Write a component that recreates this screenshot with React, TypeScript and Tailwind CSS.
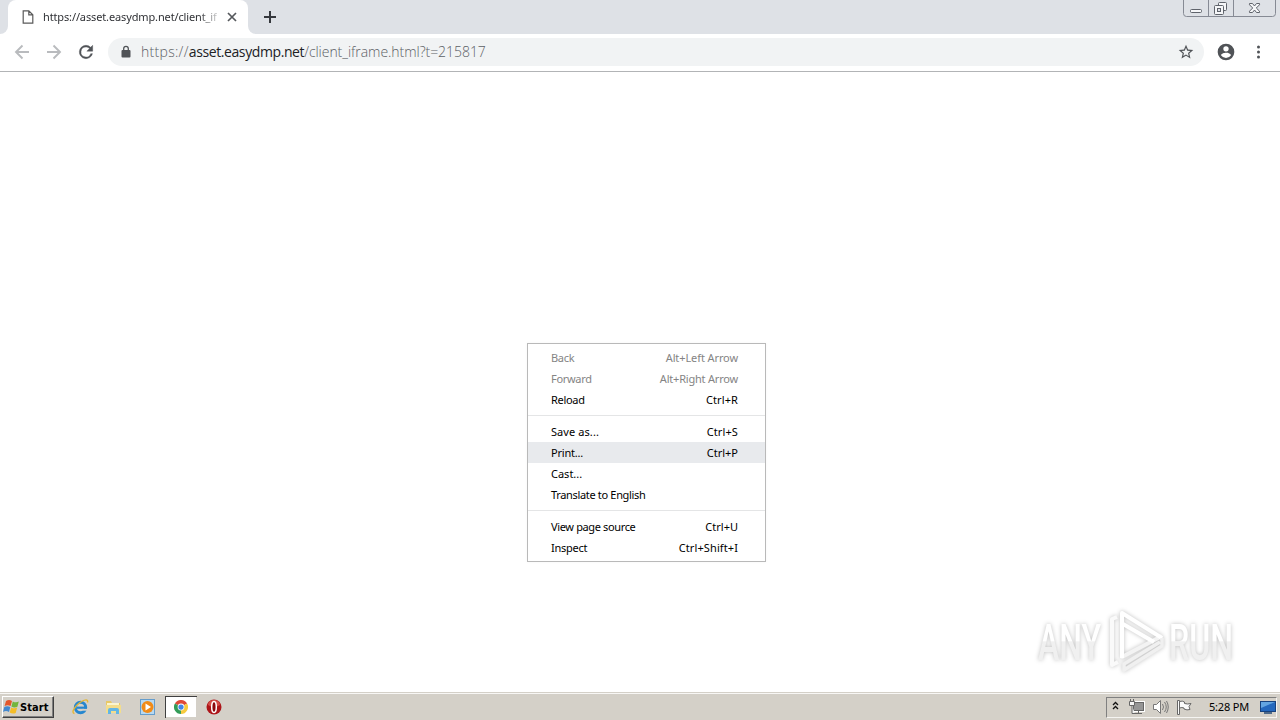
import { useId } from "react";

type MenuItem = { label: string; keys?: string; disabled?: boolean; active?: boolean; labelClass?: string; keysClass?: string };

const groups: MenuItem[][] = [
  [
    { label: "Back", keys: "Alt+Left Arrow", disabled: true, labelClass: "tracking-[-0.3px]", keysClass: "tracking-[-0.1px]" },
    { label: "Forward", keys: "Alt+Right Arrow", disabled: true, labelClass: "tracking-[-0.3px]", keysClass: "tracking-[-0.2px]" },
    { label: "Reload", keys: "Ctrl+R", labelClass: "tracking-[-0.3px]", keysClass: "tracking-[0.1px]" },
  ],
  [
    { label: "Save as...", keys: "Ctrl+S", labelClass: "tracking-[0.08px]", keysClass: "tracking-[0.1px]" },
    { label: "Print...", keys: "Ctrl+P", active: true, labelClass: "tracking-[-0.2px]" },
    { label: "Cast..." },
    { label: "Translate to English", labelClass: "tracking-[-0.33px]" },
  ],
  [
    { label: "View page source", keys: "Ctrl+U", labelClass: "tracking-[-0.36px]" },
    { label: "Inspect", keys: "Ctrl+Shift+I", labelClass: "tracking-[-0.25px]", keysClass: "tracking-[0.1px]" },
  ],
];

function TabStrip() {
  return (
    <div className="flex h-[34px] items-start bg-[#dee1e6]">
      <div className="flex h-[34px] w-2 shrink-0 items-end bg-white">
        <div className="h-full w-full rounded-br-lg bg-[#dee1e6]" />
      </div>
      <div className="flex h-[34px] w-60 shrink-0 items-center rounded-t-lg bg-white pl-[14px]">
        <svg width="12" height="14" viewBox="0 0 12 14" fill="none" stroke="#5a5a5a" strokeWidth="1.2">
          <path d="M1.2.8h5.6l4 4v8.4H1.2zM6.8.8v4h4" />
        </svg>
        <span className="ml-[9px] w-[174px] whitespace-nowrap text-[11px] leading-4 tracking-[-0.13px] text-[#303236] [mask-image:linear-gradient(to_right,black_156px,transparent_180px)]">
          https://asset.easydmp.net/client_ifr
        </span>
        <svg className="ml-[10px]" width="10" height="10" viewBox="0 0 10 10" stroke="#55585c" strokeWidth="1.7">
          <path d="M1 1l8 8M9 1L1 9" />
        </svg>
      </div>
      <div className="h-[34px] w-2 shrink-0 bg-white">
        <div className="h-full w-full rounded-bl-lg bg-[#dee1e6]" />
      </div>
      <svg className="ml-2 mt-[11px]" width="12" height="12" viewBox="0 0 12 12" stroke="#35383d" strokeWidth="2">
        <path d="M6 0v12M0 6h12" />
      </svg>
      <WindowButtons />
    </div>
  );
}

function WindowButtons() {
  return (
    <svg className="ml-auto mr-[4px]" width="93" height="18" viewBox="0 0 93 18" fill="none" stroke="#5f636b">
      <path d="M.5 0v13.5q0 3 3 3h86q3 0 3-3V0M25.5 0v16.5M50.5 0v16.5" stroke="#868a94" />
      <rect x="7.5" y="9.5" width="11" height="3" rx="1" fill="#f5f6f8" />
      <rect x="35.5" y="2.5" width="8" height="8" rx="1" fill="#f5f6f8" />
      <rect x="31.5" y="5.5" width="9" height="9" rx="1" fill="#f5f6f8" />
      <rect x="34.5" y="8.5" width="3" height="3" fill="#dee1e6" />
      <path d="M66.5 3.5h3l2 2.5 2-2.5h3v1.3L73.3 8l3.2 3.2v1.3h-3l-2-2.5-2 2.5h-3v-1.3L69.7 8l-3.2-3.2z" fill="#f5f6f8" />
    </svg>
  );
}

function Toolbar() {
  return (
    <div className="flex h-[38px] items-center border-b border-[#b2b4b6] bg-white pb-px">
      <svg className="ml-[14px]" width="16" height="16" viewBox="0 0 16 16" fill="none" stroke="#b9bbbe" strokeWidth="1.9">
        <path d="M15 8H2.5M8.5 1.5L2 8l6.5 6.5" />
      </svg>
      <svg className="ml-4" width="16" height="16" viewBox="0 0 16 16" fill="none" stroke="#b9bbbe" strokeWidth="1.9">
        <path d="M1 8h12.5M7.5 1.5L14 8l-6.5 6.5" />
      </svg>
      <svg className="ml-[14px]" width="20" height="20" viewBox="0 0 24 24" fill="#505357" stroke="#505357" strokeWidth=".5">
        <path d="M17.65 6.35A7.96 7.96 0 0 0 12 4a8 8 0 1 0 7.73 10h-2.08A6 6 0 1 1 12 6c1.66 0 3.14.69 4.22 1.78L13 11h7V4z" />
      </svg>
      <div className="ml-3 flex h-7 w-[1096px] items-center rounded-full bg-[#f1f3f4] pl-3 pr-2.5">
        <svg width="12" height="14" viewBox="0 0 12 14">
          <rect x="1.5" y="5" width="9" height="7.5" rx="1" fill="#505357" />
          <path d="M3.7 5.5V3.6a2.3 2.3 0 0 1 4.6 0v1.9" fill="none" stroke="#505357" strokeWidth="1.3" />
        </svg>
        <span className="ml-[9px] whitespace-nowrap font-['Open_Sans','Noto_Sans',sans-serif] text-[14px] font-light leading-5 tracking-[-0.04px] text-[#5c6065]">
          <span className="tracking-[0.3px]">https://</span>
          <span className="font-normal tracking-[-0.4px] text-[#202124]">asset.easydmp.net</span>/client_iframe.html?t=215817
        </span>
        <svg className="ml-auto" width="16" height="16" viewBox="1 1 22 22" fill="#505357">
          <path d="M22 9.24l-7.19-.62L12 2 9.19 8.63 2 9.24l5.46 4.73L5.82 21 12 17.27 18.18 21l-1.63-7.03zM12 15.4l-3.76 2.27 1-4.28-3.32-2.88 4.38-.38L12 6.1l1.71 4.04 4.38.38-3.32 2.88 1 4.28z" />
        </svg>
      </div>
      <svg className="ml-3" width="20" height="20" viewBox="0 0 24 24" fill="#505357">
        <path d="M12 2a10 10 0 1 0 0 20 10 10 0 0 0 0-20zm0 3a3.2 3.2 0 1 1 0 6.4A3.2 3.2 0 0 1 12 5zm0 14.2a7.2 7.2 0 0 1-6-3.22c.03-1.99 4-3.08 6-3.08s5.97 1.09 6 3.08a7.2 7.2 0 0 1-6 3.22z" />
      </svg>
      <svg className="ml-[20px]" width="5" height="14" viewBox="0 0 5 14" fill="#505357">
        <circle cx="2.5" cy="2" r="1.5" />
        <circle cx="2.5" cy="7" r="1.5" />
        <circle cx="2.5" cy="12" r="1.5" />
      </svg>
    </div>
  );
}

function ContextMenu() {
  return (
    <div className="absolute left-[527px] top-[271px] w-[239px] border border-[#b9b9b9] bg-white py-[3px] text-[11px] leading-[21px] shadow-[0_0_3px_rgba(0,0,0,0.04)]">
      {groups.map((items, g) => (
        <div key={g} className={g > 0 ? "mt-[5px] border-t border-[#e4e5e6] pt-[5px]" : ""}>
          {items.map((item) => (
            <div
              key={item.label}
              className={`flex h-[21px] justify-between pl-[23px] pr-[27px] ${item.active ? "bg-[#e8eaed]" : ""} ${item.disabled ? "text-[#848484]" : "text-black"}`}
            >
              <span className={item.labelClass}>{item.label}</span>
              {item.keys && <span className={item.keysClass}>{item.keys}</span>}
            </div>
          ))}
        </div>
      ))}
    </div>
  );
}

function Watermark() {
  const id = useId();
  return (
    <svg
      className="absolute left-[1030px] top-[532px] drop-shadow-[0_0_2px_rgba(0,0,0,0.25)]"
      width="220"
      height="76"
      viewBox="0 0 220 76"
    >
      <defs>
        <linearGradient id={id} x1="0" y1="18" x2="0" y2="56" gradientUnits="userSpaceOnUse">
          <stop offset="0.5" stopColor="#ffffff" />
          <stop offset="0.52" stopColor="#f0f0f0" />
        </linearGradient>
      </defs>
      <g fill={`url(#${id})`} fontFamily="Roboto, sans-serif" fontSize="50" fontWeight="500">
        <text x="8" y="56" textLength="63" lengthAdjust="spacingAndGlyphs">ANY</text>
        <text x="139" y="56" textLength="64" lengthAdjust="spacingAndGlyphs">RUN</text>
      </g>
      <g fill="none" strokeLinejoin="round">
        <path d="M87 13l-5 2v46l6-3" stroke="#fafafa" strokeWidth="4" />
        <path d="M92 18v35l40-21" stroke="#f3f3f3" strokeWidth="4" />
        <path d="M92 54V9l40 25" stroke="#ffffff" strokeWidth="4" />
        <path d="M93 20l31 18" stroke="#ffffff" strokeWidth="4" />
        <path d="M132 34v8L94 66v-6l36-22" stroke="#f0f0f0" strokeWidth="3.5" />
      </g>
    </svg>
  );
}

function StartFlag() {
  return (
    <svg width="17" height="16" viewBox="0 0 17 16">
      <path d="M3 2q3-2 6 0L7.6 7q-3-1.5-6 0z" fill="#e4572b" />
      <path d="M9.8 2.4q3 1.6 6 .2L14.4 7.8q-3 1.4-6-.2z" fill="#73b53c" />
      <path d="M1.3 8q3-1.7 6 0L6 13q-3-1.8-6 0z" fill="#4388cf" />
      <path d="M8.2 8.4q3 1.6 6 .2L12.7 14q-3 1.2-6-.4z" fill="#f4bd27" />
    </svg>
  );
}

function QuickLaunch() {
  return (
    <>
      <svg className="ml-[18px]" width="17" height="16" viewBox="0 0 17 16" fill="none">
        <circle cx="8.5" cy="8.5" r="5.2" stroke="#2687cf" strokeWidth="3" />
        <path d="M5 8.7h9" stroke="#2687cf" strokeWidth="2.2" />
        <path d="M10.5 10.8h5" stroke="#d4d0c8" strokeWidth="1.8" />
        <path d="M2.5 14.5C-1.5 14 3 7 8 3.5s8.5-3.5 7.5 0" stroke="#e4b635" strokeWidth="1.4" />
      </svg>
      <svg className="ml-4" width="17" height="16" viewBox="0 0 17 16">
        <path d="M1 2h5l1 2h8v10H1z" fill="#e8c866" />
        <path d="M2 4h12v3H2z" fill="#faf4cf" />
        <path d="M1 6h15v8H1z" fill="#f3dd8c" />
        <path d="M3 15v-4q0-2 2-2h7q2 0 2 2v4h-3v-3H6v3z" fill="#62b5e5" />
      </svg>
      <svg className="ml-[17px]" width="17" height="16" viewBox="0 0 17 16">
        <rect x="1.5" y=".5" width="14" height="15" fill="#b7d9f2" stroke="#659dcc" />
        <circle cx="8.5" cy="8" r="6" fill="#f18b18" />
        <path d="M6.5 4.5l5.5 3.5-5.5 3.5z" fill="#fff" />
      </svg>
      <div className="ml-[9px] flex h-[22px] w-8 items-center justify-center border-l border-t border-[#404040] bg-white pr-px pb-px shadow-[inset_-1px_-1px_0_#d4d0c8]">
        <svg width="14" height="14" viewBox="0 0 24 24">
          <path d="M12 12L1.6 6A12 12 0 0 1 22.4 6z" fill="#df4937" />
          <path d="M12 12l10.4-6A12 12 0 0 1 12 24z" fill="#f6ca3e" />
          <path d="M12 12v12A12 12 0 0 1 1.6 6z" fill="#339c58" />
          <circle cx="12" cy="12" r="5.8" fill="#fff" />
          <circle cx="12" cy="12" r="4.5" fill="#4285e8" />
        </svg>
      </div>
      <svg className="ml-[9px]" width="16" height="16" viewBox="0 0 16 16">
        <circle cx="8" cy="8" r="7.5" fill="#ad1519" />
        <path d="M2 6a6 5 0 0 1 12 0q-6 4-12 0" fill="#d64e48" />
        <ellipse cx="8" cy="8" rx="2.3" ry="5.5" fill="#8b090d" stroke="#fff" strokeWidth="1.5" />
      </svg>
    </>
  );
}

function Tray() {
  return (
    <div className="ml-auto mr-[3px] flex h-[21px] w-[171px] items-center border border-b-[#f5f4f1] border-l-[#808080] border-r-[#f5f4f1] border-t-[#808080] pl-[5px]">
      <svg className="mb-[2px]" width="7" height="10" viewBox="0 0 7 10" fill="none" stroke="#111" strokeWidth="1.3">
        <path d="M1 4l2.5-2.5L6 4M1 8l2.5-2.5L6 8" />
      </svg>
      <svg className="ml-[9px]" width="17" height="16" viewBox="0 0 17 16" fill="none" stroke="#666">
        <rect x="5.5" y="3.5" width="10" height="8" fill="#969696" stroke="#fff" strokeWidth="3" />
        <rect x="5.5" y="3.5" width="10" height="8" fill="#969696" />
        <path d="M7 14.5h7M10.5 12v2" />
        <path d="M1.5 2.5h5v4h-5zM2.5 0v2M5.5 0v2M4 7v7.5h3" fill="#f5f5f5" />
      </svg>
      <svg className="ml-[7px]" width="17" height="16" viewBox="0 0 17 16" fill="none" stroke="#777">
        <path d="M1.5 5.5h3l4-4v13l-4-4h-3z" fill="#fff" />
        <path d="M10.5 5q2 3 0 6M12.5 3q3.5 5 0 10M14.5 2q3.5 6 0 12" />
      </svg>
      <svg className="ml-[7px]" width="17" height="16" viewBox="0 0 17 16" fill="#fafafa" stroke="#666">
        <path d="M1.5 1.5h2v14h-2z" />
        <path d="M3.5 2.5q3-1 5 .5v1.5q3 1 6.5 0L13 7.5l1 3q-3 1-6-.5V9q-2-1-4.5 0z" />
      </svg>
      <span className="ml-4 whitespace-nowrap text-[11px] leading-4 tracking-[-0.2px] text-black">5:28 PM</span>
      <svg className="ml-auto" width="16" height="14" viewBox="0 0 16 14">
        <rect x=".5" y="1.5" width="15" height="10" fill="#2468bd" stroke="#17427e" />
        <path d="M1 2h14L1 8z" fill="#63a5e1" />
        <path d="M4 13h8" stroke="#234974" strokeWidth="1.5" />
      </svg>
    </div>
  );
}

function Taskbar() {
  return (
    <div className="flex h-7 items-center border-t border-[#d4d0c8] bg-[#d4d0c8] pt-px shadow-[inset_0_1px_0_#f8f7f5]">
      <button className="ml-[2px] flex h-[22px] w-[52px] items-center border border-b-[#404040] border-l-white border-r-[#404040] border-t-white bg-[#d4d0c8] shadow-[inset_-1px_-1px_0_#808080]">
        <StartFlag />
        <span className="pt-[2px] font-['DejaVu_Sans_Condensed','DejaVu_Sans',sans-serif] text-[11px] font-bold tracking-[0.1px] text-black">Start</span>
      </button>
      <QuickLaunch />
      <Tray />
    </div>
  );
}

function App() {
  return (
    <div className="flex h-[720px] w-[1280px] flex-col overflow-hidden bg-white font-['Noto_Sans','DejaVu_Sans',sans-serif]">
      <TabStrip />
      <Toolbar />
      <div className="relative flex-1">
        <ContextMenu />
        <Watermark />
      </div>
      <Taskbar />
    </div>
  );
}

export default App;
